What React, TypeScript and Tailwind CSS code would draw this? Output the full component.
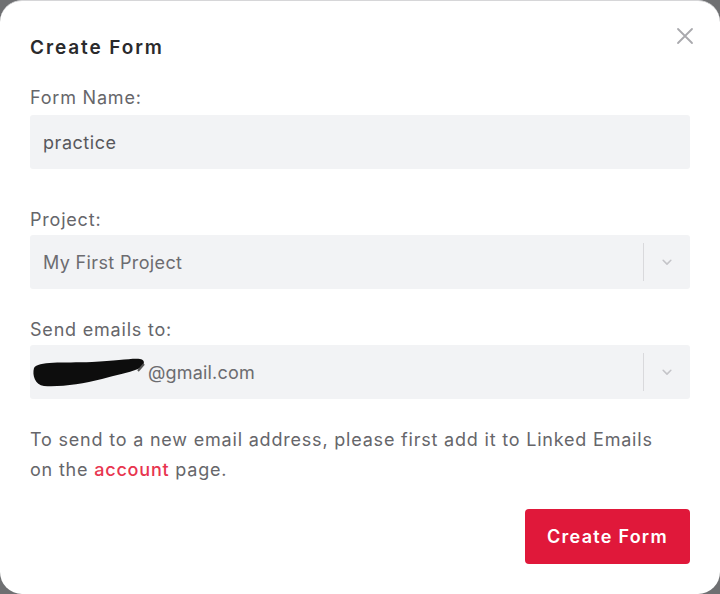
import React from 'react';

function Chevron() {
    return (
        <svg width="14" height="14" viewBox="0 0 20 20" className="text-[#c4c4c8]">
            <path d="M4.5 7.5 10 13l5.5-5.5" fill="none" stroke="currentColor" strokeWidth="2.2" strokeLinecap="round" strokeLinejoin="round" />
        </svg>
    );
}

function SelectBox({ children }: { children: React.ReactNode }) {
    return (
        <div className="flex h-[54px] items-center rounded-[3px] bg-[#f2f3f5]">
            <div className="flex flex-1 items-center">{children}</div>
            <div className="h-[38px] w-px bg-[#d9d9dc]" />
            <div className="flex w-[46px] items-center justify-center">
                <Chevron />
            </div>
        </div>
    );
}

export default function App() {
    return (
        <div className="h-[594px] w-[720px] bg-[#6f7072]" style={{ fontFamily: 'Inter, "Noto Sans", sans-serif' }}>
            <div className="relative h-full w-full rounded-[22px] border-t border-[#d6d6d8] bg-white px-[30px] pt-[34px] tracking-[0.05em]">
                {/* 닫기 버튼 */}
                <button className="absolute right-[26px] top-[26px] text-[#a9a9ad]">
                    <svg width="18" height="18" viewBox="0 0 18 18">
                        <path d="M2 2l14 14M16 2 2 16" stroke="currentColor" strokeWidth="1.8" strokeLinecap="round" />
                    </svg>
                </button>

                <h2 className="text-[19px] font-semibold leading-[26px] text-[#2a2a2c] tracking-[0.1em]">Create Form</h2>

                <div className="mt-[26px]">
                    <label className="block text-[18px] leading-[22px] text-[#66666a]">Form Name:</label>
                    <div className="mt-[6px] flex h-[54px] items-center rounded-[3px] bg-[#f2f3f5] pl-[13px] text-[18px] tracking-[0.03em] text-[#58585c]">
                        practice
                    </div>
                </div>

                <div className="mt-[40px]">
                    <label className="block text-[18px] leading-[22px] text-[#66666a]">Project:</label>
                    <div className="mt-[4px]">
                        <SelectBox>
                            <span className="pl-[13px] text-[18px] tracking-[0.02em] text-[#6c6c70]">My First Project</span>
                        </SelectBox>
                    </div>
                </div>

                <div className="mt-[30px]">
                    <label className="block text-[18px] leading-[22px] text-[#66666a]">Send emails to:</label>
                    <div className="mt-[4px]">
                        <SelectBox>
                            {/* 가려진 이메일 */}
                            <svg width="118" height="34" viewBox="0 0 118 34" className="ml-[2px] -mr-[2px]">
                                <path d="M2 13 C6 6 30 8 60 7 C85 6 100 3 108 4 C114 5 113 11 106 14 C96 18 84 20 70 24 C50 29 30 32 12 31 C3 30 0 20 2 13 Z" fill="#0d0d0d" />
                                <path d="M106 16 L112 9" stroke="#555" strokeWidth="2" />
                            </svg>
                            <span className="text-[18px] tracking-[0.01em] text-[#6c6c70]">@gmail.com</span>
                        </SelectBox>
                    </div>
                </div>

                <p className="mt-[26px] text-[18px] leading-[30px] text-[#66666a]">
                    To send to a new email address, please first add it to Linked Emails
                    <br />
                    on the <span className="font-medium text-[#e8354f]">account</span> page.
                </p>

                <div className="mt-[24px] flex justify-end">
                    <button className="h-[55px] w-[165px] rounded-[4px] bg-[#e0183a] text-[18px] font-semibold tracking-[0.07em] text-white">
                        Create Form
                    </button>
                </div>
            </div>
        </div>
    );
}
